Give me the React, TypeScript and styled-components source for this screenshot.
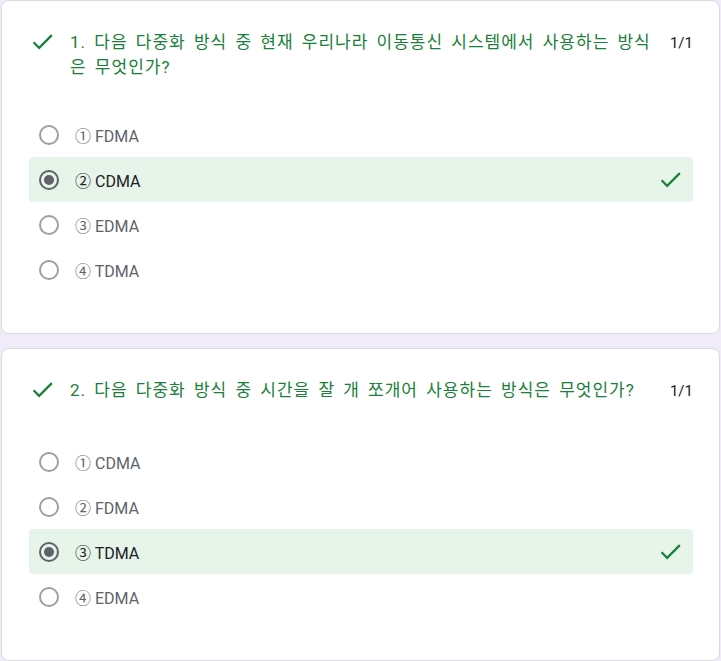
import styled, {createGlobalStyle} from 'styled-components';

const GlobalStyle = createGlobalStyle`
    body {
        margin: 0;
        background: #f0ebf8;
        font-family: Roboto, "Noto Sans CJK KR", sans-serif;
    }
`;

interface IOption {
    label: string;
    selected?: boolean;
}

interface IQuestion {
    title: string;
    score: string;
    options: IOption[];
}

const questions: IQuestion[] = [
    {
        title: '1. 다음 다중화 방식 중 현재 우리나라 이동통신 시스템에서 사용하는 방식은 무엇인가?',
        score: '1/1',
        options: [
            {label: '① FDMA'},
            {label: '② CDMA', selected: true},
            {label: '③ EDMA'},
            {label: '④ TDMA'},
        ],
    },
    {
        title: '2. 다음 다중화 방식 중 시간을 잘 개 쪼개어 사용하는 방식은 무엇인가?',
        score: '1/1',
        options: [
            {label: '① CDMA'},
            {label: '② FDMA'},
            {label: '③ TDMA', selected: true},
            {label: '④ EDMA'},
        ],
    },
];

const Page = styled.div`
    display: flex;
    flex-direction: column;
    gap: 14px;
    padding: 0 1px 0 1px;
`;

const Card = styled.div`
    background: #ffffff;
    border: 1px solid #dadce0;
    border-radius: 8px;
    padding: 27px 26px 41px 27px;
`;

const Header = styled.div`
    display: flex;
    align-items: flex-start;
    min-height: 31px;
    margin-bottom: 32px;
`;

const CheckIcon = styled.svg<{$size: number}>`
    flex: none;
    width: ${(props) => props.$size}px;
    height: ${(props) => props.$size}px;
    fill: #188038;
`;

const Title = styled.div`
    flex: 1;
    margin-left: 14px;
    padding-top: 2px;
    font-size: 17px;
    line-height: 25px;
    letter-spacing: 1px;
    word-spacing: 3px;
    color: #188038;
    max-width: 586px;
`;

const Score = styled.div`
    margin-left: auto;
    padding-top: 3px;
    font-size: 15px;
    line-height: 25px;
    color: #202124;
`;

const Row = styled.div<{$selected?: boolean}>`
    display: flex;
    align-items: center;
    height: 45px;
    padding: 0 9px 0 10px;
    border-radius: 4px;
    background: ${(props) => (props.$selected ? '#e6f4ea' : 'transparent')};
`;

const Radio = styled.span<{$selected?: boolean}>`
    flex: none;
    display: flex;
    align-items: center;
    justify-content: center;
    box-sizing: border-box;
    width: 20px;
    height: 20px;
    border-radius: 50%;
    border: 2px solid ${(props) => (props.$selected ? '#5f6368' : '#9aa0a6')};

    &::after {
        content: '';
        display: ${(props) => (props.$selected ? 'block' : 'none')};
        width: 10px;
        height: 10px;
        border-radius: 50%;
        background: #5f6368;
    }
`;

const Label = styled.span<{$selected?: boolean}>`
    margin-left: 16px;
    font-size: 16px;
    color: ${(props) => (props.$selected ? '#202124' : '#5f6368')};
`;

const RowCheck = styled.span`
    margin-left: auto;
    display: flex;
`;

const Check = ({size}: {size: number}) => (
    <CheckIcon $size={size} viewBox="0 0 24 24">
        <path d="M9 16.17L4.83 12l-1.42 1.41L9 19 21 7l-1.41-1.41z" />
    </CheckIcon>
);

const App = () => {
    return (
        <>
            <GlobalStyle />
            <Page>
                {questions.map((q) => (
                    <Card key={q.title}>
                        <Header>
                            <Check size={27} />
                            <Title>{q.title}</Title>
                            <Score>{q.score}</Score>
                        </Header>
                        {q.options.map((opt) => (
                            <Row key={opt.label} $selected={opt.selected}>
                                <Radio $selected={opt.selected} />
                                <Label $selected={opt.selected}>{opt.label}</Label>
                                {opt.selected && (
                                    <RowCheck>
                                        <Check size={27} />
                                    </RowCheck>
                                )}
                            </Row>
                        ))}
                    </Card>
                ))}
            </Page>
        </>
    );
};

export default App;
